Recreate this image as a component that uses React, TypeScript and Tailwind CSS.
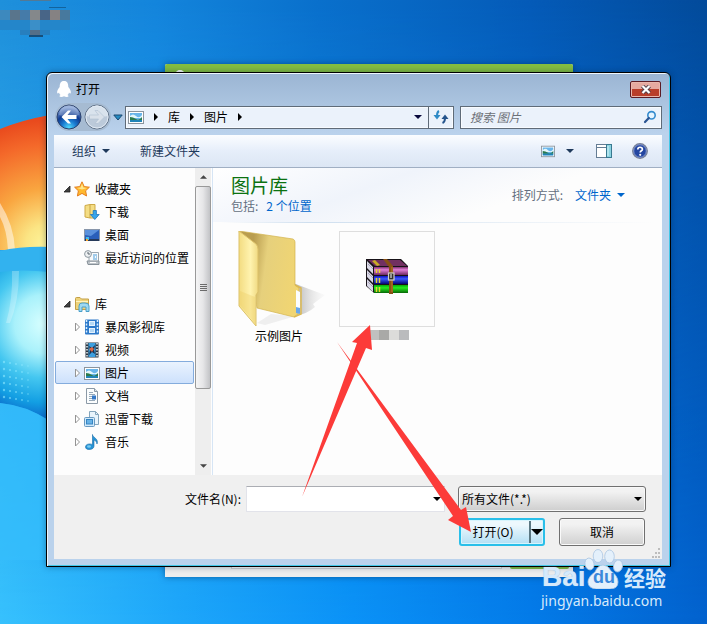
import type { ReactNode } from "react";

function Triangle({ className }: { className?: string }) {
  return (
    <svg viewBox="0 0 8 4" width="8" height="4" className={className} aria-hidden="true">
      <path d="M0 0H8L4 4Z" fill="currentColor" />
    </svg>
  );
}

function Wallpaper() {
  return (
    <svg className="absolute inset-0 h-full w-full" viewBox="0 0 707 624" preserveAspectRatio="none" aria-hidden="true">
      <defs>
        <linearGradient id="sky" x1="0" y1="0" x2="1" y2="0">
          <stop offset="0" stopColor="#1f90db" />
          <stop offset=".22" stopColor="#1485dc" />
          <stop offset=".45" stopColor="#0a70cc" />
          <stop offset=".75" stopColor="#055bb8" />
          <stop offset="1" stopColor="#034b9b" />
        </linearGradient>
        <linearGradient id="ground" x1="0" y1="0" x2="1" y2="0">
          <stop offset="0" stopColor="#37c1fd" />
          <stop offset=".25" stopColor="#1ea7fa" />
          <stop offset=".5" stopColor="#0a92f7" />
          <stop offset=".75" stopColor="#037be9" />
          <stop offset="1" stopColor="#0262ce" />
        </linearGradient>
        <linearGradient id="fade" x1="0" y1="0" x2="0" y2="1">
          <stop offset="0" stopColor="#000" />
          <stop offset=".3" stopColor="#555" />
          <stop offset="1" stopColor="#fff" />
        </linearGradient>
        <mask id="down">
          <rect width="707" height="624" fill="url(#fade)" />
        </mask>
        <radialGradient id="flame" gradientUnits="userSpaceOnUse" cx="46" cy="245" r="125">
          <stop offset="0" stopColor="#fdf59b" />
          <stop offset=".16" stopColor="#fbe584" />
          <stop offset=".45" stopColor="#f9a640" />
          <stop offset=".8" stopColor="#f4692a" />
          <stop offset="1" stopColor="#e94a1d" />
        </radialGradient>
        <radialGradient id="pane" gradientUnits="userSpaceOnUse" cx="44" cy="324" r="98">
          <stop offset="0" stopColor="#d8ffff" />
          <stop offset=".3" stopColor="#a9f1fb" />
          <stop offset=".55" stopColor="#45c7f0" />
          <stop offset=".8" stopColor="#139fe3" />
          <stop offset="1" stopColor="#0a63c8" />
        </radialGradient>
      </defs>
      <rect width="707" height="624" fill="url(#sky)" />
      <rect width="707" height="624" fill="url(#ground)" mask="url(#down)" />
      <path d="M0 129Q22 120 50 115V250H0Z" fill="url(#flame)" />
      <path d="M0 203Q14 225 15 250H8Q7 230 0 217Z" fill="#fff" opacity=".5" />
      <path d="M0 251Q22 246 50 247V274H0Z" fill="#32b2ef" />
      <path d="M0 272Q20 269 50 272V421Q25 405 0 403Z" fill="url(#pane)" />
      <path d="M12 271h7q0 30-9 52H6q7-24 6-52Z" fill="#fff" opacity=".25" />
      <g fill="#8ee9ff" opacity=".6">
        {[0, 1, 2, 3, 4, 5].map((r) =>
          [0, 1, 2, 3, 4].map((c) => (
            <circle key={`${r}-${c}`} cx={4 + c * 6} cy={362 + r * 7 + c} r={1.2 - c * 0.1} />
          )),
        )}
      </g>
      <path d="M0 403Q25 405 50 421V560H0Z" fill="#34bdfc" opacity=".7" />
      <g>
        <rect x="20" y="0" width="31" height="1" fill="#527995" />
        <rect x="0" y="10" width="10" height="10" fill="#3d89be" />
        <rect x="10" y="10" width="10" height="10" fill="#59758c" />
        <rect x="20" y="10" width="10" height="10" fill="#457ba9" />
        <rect x="30" y="10" width="10" height="10" fill="#84888b" />
        <rect x="40" y="10" width="10" height="10" fill="#486587" />
        <rect x="50" y="10" width="10" height="10" fill="#858283" />
        <rect x="60" y="10" width="10" height="10" fill="#47799e" />
        <rect x="0" y="20" width="70" height="10" fill="#2486ca" />
        <rect x="30" y="20" width="10" height="10" fill="#3b8fc8" />
        <rect x="20" y="30" width="30" height="5" fill="#277fbe" />
        <rect x="30" y="30" width="10" height="5" fill="#546f88" />
        <rect x="29" y="35" width="14" height="2" fill="#174e79" />
        <rect x="49" y="7" width="17" height="1" fill="#12639d" />
      </g>
    </svg>
  );
}

function PictureIcon({ size }: { size: number }) {
  return (
    <svg width={size} height={size} viewBox="0 0 16 16" aria-hidden="true">
      <rect x=".5" y="2.5" width="15" height="12" fill="#fff" stroke="#8b949c" />
      <rect x="2" y="4" width="12" height="9" fill="#69b5ea" />
      <path d="M2 7q3-3 6 0t6-1v3H2Z" fill="#e2f6fb" />
      <path d="M2 8q3 0 6 2t6-2v3H2Z" fill="#2b7a4c" />
      <path d="M2 11h12v2H2Z" fill="#2184b7" />
    </svg>
  );
}

const icons: Record<string, ReactNode> = {
  star: (
    <>
      <path d="M8 .8 10.2 5.6 15.4 6.2 11.6 9.8 12.6 15 8 12.4 3.4 15 4.4 9.8.6 6.2 5.8 5.6Z" fill="#ffb92e" stroke="#e57f20" strokeLinejoin="round" />
      <path d="M8 2.5 9.3 6.4 13 7 8 8.5 3 7 6.6 6.4Z" fill="#ffe68c" />
    </>
  ),
  download: (
    <>
      <path d="M1 1.5 6 .5h5V14H6l-5-1Z" fill="#f4dd84" stroke="#cda947" />
      <path d="M6 1V14" stroke="#c9a444" />
      <path d="M9.2 6.5h3.2v4h2.8l-4.4 5-4.4-5h2.8Z" fill="#36a5ec" stroke="#1a73bb" strokeWidth=".8" />
    </>
  ),
  desktop: (
    <>
      <rect x=".5" y="2.5" width="15" height="11" fill="#2a5fba" stroke="#8896aa" />
      <path d="M1 3h14L7 9 1 8Z" fill="#5b91dc" />
      <rect x="1" y="12" width="14" height="2" fill="#263959" />
      <path d="M2 10h3v3H2Z" fill="#45bce8" />
      <path d="M2 12h2v2H2Z" fill="#f7a32c" />
    </>
  ),
  recent: (
    <>
      <path d="M5 2.500h9.500v9H5Z" fill="#f8fafb" stroke="#9aa5ae" />
      <path d="M9 5h4M9 7h2M12 7h1M9 9h4" stroke="#4d9dd9" />
      <path d="M3 11h12v3.500H4Z" fill="#bfc5ca" stroke="#879199" />
      <path d="M6 12.500h6" stroke="#fff" />
      <circle cx="4" cy="4" r="3.400" fill="#eef1f3" stroke="#8d989f" />
      <path d="M4 2v2h2" fill="none" stroke="#59656d" />
    </>
  ),
  library: (
    <>
      <path d="M1.500 13.500V2.500Q1.500 1.500 2.500 1.500H6l1.500 1.500H14.500V13.500Z" fill="#eed37b" stroke="#c4a047" />
      <path d="M2 5.500H14" stroke="#fff4bd" />
      <path d="M5 15.500V10Q5 7 8 7h3q4 0 4 3v5.500h-3V11H8v4.500Z" fill="#9ed9f2" stroke="#4b9fc9" />
    </>
  ),
  storm: (
    <>
      <rect x="1" y=".5" width="14" height="15" rx="1" fill="#2c79ca" />
      <path d="M2.500 1V15M13.500 1V15" stroke="#d7edff" strokeWidth="1.500" strokeDasharray="2 1.500" />
      <path d="M5 2h6v5H5ZM5 9h6v5H5Z" fill="#e3f1fd" />
      <path d="M6 3h4v3H6ZM6 10h4v3H6Z" fill="#b4d8f5" />
    </>
  ),
  video: (
    <>
      <rect x="1.500" y=".5" width="13" height="15" fill="#2b3540" />
      <path d="M3 1V15M13 1V15" stroke="#e9eff2" strokeWidth="1.500" strokeDasharray="1.500 1.500" />
      <rect x="4.500" y="1" width="7" height="14" fill="#3c9fdf" />
      <path d="m5 4 3 2 3-3-1 5 1 4-3-2-3 3 1-5Z" fill="#1a304e" />
      <path d="m5 7 3-2 2 2-2 3Z" fill="#de6845" />
    </>
  ),
  document: (
    <>
      <path d="M2.500.5h8l3 3v12h-11Z" fill="#fbfdfe" stroke="#8b99a6" />
      <path d="M10.500.5v3h3" fill="#dbe4ea" stroke="#8b99a6" />
      <path d="M5 4.500h4M5 6.500h6M5 8.500h3M5 10.500h3M5 12.500h6" stroke="#97a9b9" />
      <rect x="8" y="7.500" width="4" height="4" fill="#3479c8" />
    </>
  ),
  thunder: (
    <>
      <path d="M5.500.5h6l3 3v10h-9Z" fill="#e8f4fc" stroke="#84a6bd" />
      <path d="M11.500.5v3h3" fill="none" stroke="#84a6bd" />
      <rect x=".5" y="6.500" width="10" height="9" rx="1" fill="#d0e9fa" stroke="#6899c0" />
      <rect x="2.500" y="8.500" width="6" height="4.500" fill="#68b2e5" stroke="#3685c3" />
    </>
  ),
  music: (
    <>
      <path d="M8.500.5c0 3 6.500 4 4.500 9.500-.3-2.500-1.500-3.500-3-4V12c0 4.500-8.500 4.700-8.500 1 0-3 4-3.700 7-2.500Z" fill="#2693d5" stroke="#176ca8" strokeWidth=".6" />
      <ellipse cx="5" cy="12.500" rx="2" ry="1.300" fill="#79ccf4" />
    </>
  ),
};

function TreeIcon({ name }: { name: string }) {
  if (name === "picture") return <PictureIcon size={16} />;
  return (
    <svg width="16" height="16" viewBox="0 0 16 16" aria-hidden="true">
      {icons[name]}
    </svg>
  );
}

function TreeGroup({ icon, label, children }: { icon: string; label: string; children: ReactNode }) {
  return (
    <li>
      <button className="flex h-[23px] w-full items-center pl-2">
        <svg width="8" height="8" viewBox="0 0 8 8" className="mr-[3px]" aria-hidden="true">
          <path d="M7 1V7H1Z" fill="#404040" stroke="#222" strokeWidth=".8" />
        </svg>
        <TreeIcon name={icon} />
        <span className="ml-[5px]">{label}</span>
      </button>
      <ul>{children}</ul>
    </li>
  );
}

function TreeItem({ icon, label, leaf, selected }: { icon: string; label: string; leaf?: boolean; selected?: boolean }) {
  return (
    <li>
      <button
        className={
          selected
            ? "flex h-[23px] w-full items-center rounded-xs border border-[#84acdd] bg-linear-to-b from-[#eaf3fe] to-[#cde1fc] pl-[18px]"
            : "flex h-[23px] w-full items-center border border-transparent pl-[18px]"
        }
      >
        <svg width="7" height="10" viewBox="0 0 7 10" className={leaf ? "invisible mr-[3px]" : "mr-[3px]"} aria-hidden="true">
          <path d="M1.500 1 5.500 5 1.500 9Z" fill="#fff" stroke="#949494" />
        </svg>
        <TreeIcon name={icon} />
        <span className="ml-[5px] whitespace-nowrap">{label}</span>
      </button>
    </li>
  );
}

function TitleBar() {
  return (
    <header className="flex h-[30px] items-center pl-[2px] pt-[2px]">
      <svg width="16" height="18" viewBox="0 0 16 18" aria-hidden="true">
        <path d="M8 1C4.500 1 3.700 3.700 3.700 7 2 9 .8 11 1.200 13c.3 1 1.200.3 1.800-.6.2 1.200.7 2 1.500 2.700-1.800.8-1.300 2 .8 2 1 0 2-.3 2.700-.8.700.5 1.700.8 2.700.8 2.100 0 2.600-1.200.8-2 .8-.7 1.300-1.500 1.500-2.700.6.9 1.500 1.600 1.800.6.4-2-.8-4-2.500-6C12.300 3.700 11.500 1 8 1Z" fill="#fff" />
      </svg>
      <h1 className="ml-1 text-xs">打开</h1>
      <button
        aria-label="关闭"
        className="ml-auto mr-px flex h-[17px] w-[31px] items-center justify-center rounded-xs border border-[#5c1b24] bg-linear-to-b from-[#e6aaa0] from-45% to-[#b93e2a] to-50% shadow-[inset_0_0_0_1px_#e9b7ac]"
      >
        <svg width="12" height="9" viewBox="0 0 12 9" aria-hidden="true">
          <path d="m2.500 1 7 7m0-7-7 7" stroke="#53414a" strokeWidth="4" />
          <path d="m2.500 1 7 7m0-7-7 7" stroke="#fff" strokeWidth="2.200" />
        </svg>
      </button>
    </header>
  );
}

function NavButtons() {
  return (
    <div className="flex items-center">
      <div className="flex gap-[2px] rounded-full bg-[#a6bbd2] p-px">
        <button aria-label="后退">
          <svg width="26" height="26" viewBox="0 0 26 26" aria-hidden="true">
            <defs>
              <radialGradient id="orb" cx=".5" cy=".95" r=".85">
                <stop offset="0" stopColor="#52dcff" />
                <stop offset=".35" stopColor="#1a7bd0" />
                <stop offset=".65" stopColor="#113c92" />
                <stop offset="1" stopColor="#7c9bd2" />
              </radialGradient>
            </defs>
            <circle cx="13" cy="13" r="12" fill="url(#orb)" stroke="#2b416c" />
            <path d="M3 11A10 10 0 0 1 23 11Q13 14 3 11Z" fill="#fff" opacity=".25" />
            <path d="M5.500 13 12 6.500h3L11.500 11H20.500v4H11.500L15 19.500H12Z" fill="#fff" />
          </svg>
        </button>
        <button aria-label="前进">
          <svg width="26" height="26" viewBox="0 0 26 26" aria-hidden="true">
            <circle cx="13" cy="13" r="12" fill="#bccada" stroke="#64758a" />
            <path d="M2.500 12A10.500 10.500 0 0 1 23.500 12Q13 15 2.500 12Z" fill="#e0e8f1" opacity=".8" />
            <circle cx="13" cy="13" r="11" fill="none" stroke="#e1eaf4" />
            <path d="M20.500 13 14 6.500h-3L14.500 11H5.500v4h9L11 19.500h3Z" fill="#d9e1ea" stroke="#afbfd1" strokeWidth=".6" />
          </svg>
        </button>
      </div>
      <button aria-label="最近的位置" className="mx-[2px]">
        <svg width="10" height="7" viewBox="0 0 10 7" aria-hidden="true">
          <path d="M.8 1h8.400L5 6Z" fill="#258bc2" stroke="#1b4870" />
        </svg>
      </button>
    </div>
  );
}

function Crumb({ children }: { children: string }) {
  return (
    <>
      <button className="text-xs">{children}</button>
      <svg width="4" height="8" viewBox="0 0 4 8" className="mx-[10px]" aria-hidden="true">
        <path d="M0 0 4 4 0 8Z" />
      </svg>
    </>
  );
}

function AddressRow() {
  return (
    <div className="flex items-center pl-px">
      <NavButtons />
      <div className="flex h-[23px] min-w-0 flex-1 border border-[#5f6b78] bg-[#ebf2fb] shadow-[inset_0_0_0_1px_#f8fbff]">
        <nav aria-label="地址" className="flex flex-1 items-center pl-[2px]">
          <PictureIcon size={16} />
          <svg width="4" height="8" viewBox="0 0 4 8" className="mx-[10px]" aria-hidden="true">
            <path d="M0 0 4 4 0 8Z" />
          </svg>
          <Crumb>库</Crumb>
          <Crumb>图片</Crumb>
        </nav>
        <button aria-label="以前的位置" className="px-[6px] text-[#08093c]">
          <Triangle />
        </button>
        <button aria-label="刷新" className="flex w-[25px] items-center justify-center border-l border-[#5f6b78]">
          <svg width="16" height="14" viewBox="0 0 16 14" aria-hidden="true">
            <path d="M6 1Q4 2 4 6" fill="none" stroke="#2e8ac6" strokeWidth="2" />
            <path d="M.5 5h7L4 9.500Z" fill="#2e8ac6" />
            <path d="M9.500 13q2.500-1 2.500-5" fill="none" stroke="#24548c" strokeWidth="2" />
            <path d="M8.500 9h7L12 4.500Z" fill="#24548c" />
          </svg>
        </button>
      </div>
      <label className="ml-[6px] flex h-[23px] w-[202px] items-center border border-[#5f6b78] bg-[#ebf2fb] pl-[9px] pr-1 shadow-[inset_0_0_0_1px_#f8fbff]">
        <input
          aria-label="搜索图片"
          placeholder="搜索 图片"
          className="min-w-0 flex-1 text-xs italic outline-none placeholder:text-[#6b7077]"
        />
        <svg width="14" height="14" viewBox="0 0 14 14" aria-hidden="true">
          <circle cx="8.500" cy="5.300" r="3.700" fill="#e5f4ff" stroke="#348bce" strokeWidth="1.600" />
          <path d="M5.800 8 2 12" stroke="#2a5492" strokeWidth="2.200" strokeLinecap="round" />
        </svg>
      </label>
    </div>
  );
}

function Toolbar() {
  return (
    <div className="flex h-[33px] items-center border-b border-[#a0afc3] bg-linear-to-b from-[#fbfdff] via-[#e6eefa] via-50% to-[#dce6f4] pl-[18px] pr-[14px] text-[#1e395b]">
      <button className="flex items-center gap-[6px]">
        组织
        <Triangle />
      </button>
      <button className="ml-[30px]">新建文件夹</button>
      <button aria-label="更改视图" className="ml-auto flex items-center gap-[11px]">
        <PictureIcon size={14} />
        <Triangle />
      </button>
      <button aria-label="预览窗格" className="ml-[22px]">
        <svg width="16" height="16" viewBox="0 0 16 16" aria-hidden="true">
          <rect x=".5" y="1.500" width="15" height="13" fill="#fff" stroke="#657d94" />
          <path d="M1 4.500h9" stroke="#657d94" />
          <rect x="10.500" y="1.500" width="5" height="13" fill="#8bd3e1" stroke="#397990" />
          <path d="M12 3v10" stroke="#d7f5fa" />
        </svg>
      </button>
      <button aria-label="帮助" className="ml-5">
        <svg width="16" height="16" viewBox="0 0 16 16" aria-hidden="true">
          <circle cx="8" cy="8" r="7.300" fill="#2446a1" stroke="#7a8296" strokeWidth="1.300" />
          <circle cx="8" cy="8" r="6.300" fill="none" stroke="#a8b8df" strokeWidth=".7" />
          <path d="M5.800 6.500C5.800 3.500 10.400 3.600 10.400 6.200 10.400 7.800 8.200 7.800 8.200 9.600" fill="none" stroke="#fff" strokeWidth="1.700" />
          <circle cx="8.200" cy="11.800" r="1.100" fill="#fff" />
        </svg>
      </button>
    </div>
  );
}

function Sidebar() {
  return (
    <aside className="flex w-[157px] shrink-0">
      <ul className="flex-1 px-px pb-[22px] pt-[9px]">
        <TreeGroup icon="star" label="收藏夹">
          <TreeItem icon="download" label="下载" leaf />
          <TreeItem icon="desktop" label="桌面" leaf />
          <TreeItem icon="recent" label="最近访问的位置" leaf />
        </TreeGroup>
        <li className="h-[23px]" aria-hidden="true" />
        <TreeGroup icon="library" label="库">
          <TreeItem icon="storm" label="暴风影视库" />
          <TreeItem icon="video" label="视频" />
          <TreeItem icon="picture" label="图片" selected />
          <TreeItem icon="document" label="文档" />
          <TreeItem icon="thunder" label="迅雷下载" />
          <TreeItem icon="music" label="音乐" />
        </TreeGroup>
      </ul>
      <div className="flex w-4 flex-col bg-[#eeeeee] text-[#444]">
        <button aria-label="向上滚动" className="flex h-[18px] items-center justify-center">
          <Triangle className="w-[7px] rotate-180" />
        </button>
        <div className="flex h-[203px] flex-col items-center justify-center gap-px rounded-xs border border-[#999] bg-linear-to-r from-[#f5f5f5] via-[#e6e6e8] to-[#c2c3c6]">
          <i className="h-px w-[7px] bg-[#6b6b6b]" />
          <i className="h-px w-[7px] bg-[#6b6b6b]" />
          <i className="h-px w-[7px] bg-[#6b6b6b]" />
          <i className="h-px w-[7px] bg-[#6b6b6b]" />
        </div>
        <button aria-label="向下滚动" className="mt-auto flex h-[18px] items-center justify-center">
          <Triangle className="w-[7px]" />
        </button>
      </div>
    </aside>
  );
}

function FolderPicture() {
  return (
    <svg width="96" height="96" viewBox="0 0 96 96" aria-hidden="true">
      <defs>
        <linearGradient id="front" x1="0" y1="0" x2="1" y2="0">
          <stop offset="0" stopColor="#f3dc81" />
          <stop offset=".6" stopColor="#fff3af" />
          <stop offset="1" stopColor="#f0da83" />
        </linearGradient>
        <linearGradient id="back" x1="0" y1="0" x2="1" y2=".2">
          <stop offset=".25" stopColor="#b99d4f" />
          <stop offset=".5" stopColor="#e6d07c" />
          <stop offset="1" stopColor="#f0d573" />
        </linearGradient>
        <linearGradient id="shade" x1="0" y1="0" x2="1" y2="0">
          <stop offset="0" stopColor="#777" stopOpacity=".6" />
          <stop offset="1" stopColor="#ddd" stopOpacity=".1" />
        </linearGradient>
      </defs>
      <path d="M62 52 94 64 82 73 84 76Q76 83 66 84Z" fill="url(#shade)" />
      <path d="m26 92 14-9 25 2-31 9Z" fill="#777" opacity=".1" />
      <path d="M8 0 62 8Q64 9 64 11V54L68 57V82L63 86 26 77Z" fill="url(#back)" stroke="#d3b34e" strokeWidth=".7" />
      <path d="M65 59l4 2v22l-4-2Z" fill="#fbfdff" />
      <path d="M65 76l4 1v6l-4-1Z" fill="#69a7ea" />
      <path d="M64 54 70 57V83L63 86" fill="none" stroke="#dcb951" strokeWidth="1.500" />
      <path d="M8 0 25 13Q27 15 27 18V61L25 64V95L8 75Z" fill="url(#front)" stroke="#dcc169" />
      <path d="M9 60 24 66V93L9 74Z" fill="#eccb61" opacity=".35" />
    </svg>
  );
}

function ArchivePicture() {
  return (
    <svg width="42" height="35" viewBox="0 0 42 35" aria-hidden="true">
      <defs>
        <linearGradient id="purple" x1="0" y1="0" x2="0" y2="1">
          <stop offset="0" stopColor="#7e316f" />
          <stop offset=".35" stopColor="#e27fd6" />
          <stop offset="1" stopColor="#6f2963" />
        </linearGradient>
        <linearGradient id="blue" x1="0" y1="0" x2="0" y2="1">
          <stop offset="0" stopColor="#1112c0" />
          <stop offset=".35" stopColor="#3b59ff" />
          <stop offset="1" stopColor="#050575" />
        </linearGradient>
        <linearGradient id="green" x1="0" y1="0" x2="0" y2="1">
          <stop offset="0" stopColor="#09a609" />
          <stop offset=".35" stopColor="#26ed20" />
          <stop offset="1" stopColor="#076607" />
        </linearGradient>
      </defs>
      <path d="M0 0H35L42 7v27H8L0 27Z" fill="#171218" />
      <path d="M2 1H34L41 7H9Z" fill="#713061" />
      <path d="m1 2 6 6v7L1 9ZM1 11l6 6v7l-6-6ZM1 20l6 6v7l-6-6Z" fill="#d9d8e6" />
      <path d="m2 5 5 5M2 14l5 5M2 23l5 5" stroke="#8f8aa4" strokeWidth=".7" />
      <rect x="8" y="8" width="34" height="8" fill="url(#purple)" />
      <rect x="8" y="17" width="34" height="8" fill="url(#blue)" />
      <rect x="8" y="26" width="34" height="8" fill="url(#green)" />
      <path d="M10.500 10v4M13.500 10v4M10.500 19v5M13.500 19v5M10.500 28v5M13.500 28v5" stroke="#e8d42f" strokeWidth="1.500" />
      <path d="m6 2 3-1 5 5-3 1Z" fill="#c9ac25" />
      <path d="M17 0h4l6 7v28h-4V8Z" fill="#885014" />
      <path d="M26 8v25" stroke="#bc7a2c" />
      <rect x="22.500" y="14" width="5.500" height="7" fill="#33302b" stroke="#d2d0cb" strokeWidth="1.200" />
      <path d="M25 15v4" stroke="#fff" />
    </svg>
  );
}

function Library() {
  return (
    <main className="ml-px flex-1 border-l border-[#d6e5f5]">
      <div className="flex h-[54px] items-start justify-between bg-linear-[160deg] from-white via-[#f0f4fb] via-35% to-[#fdfdfd] to-65% pl-[18px] pr-[37px]">
        <div>
          <h2 className="pt-[5px] text-[19px] leading-6 text-[#0c7211]">图片库</h2>
          <p className="leading-[18px] text-[#646f80]">
            包括:
            <a href="#locations" className="ml-2 text-[#0066cc]">2 个位置</a>
          </p>
        </div>
        <div className="flex items-center pt-[18px] leading-[18px] text-[#646f80]">
          排列方式:
          <button className="ml-3 flex items-center gap-[6px] text-[#0066cc]">
            文件夹
            <Triangle />
          </button>
        </div>
      </div>
      <div className="mx-2 h-px bg-linear-to-r from-transparent via-[#cfdfef] via-20% to-transparent" />
      <ul className="flex gap-3 pl-[18px] pt-2">
        <li className="flex w-24 flex-col items-center">
          <FolderPicture />
          <span className="leading-[18px]">示例图片</span>
        </li>
        <li className="flex w-24 flex-col items-center">
          <div className="flex h-24 w-24 items-center justify-center border border-[#dedede] bg-[#fdfdfd] pb-[6px]">
            <ArchivePicture />
          </div>
          <svg width="40" height="10" viewBox="0 0 40 10" className="ml-1 mt-[3px]" aria-hidden="true">
            <rect width="10" height="10" fill="#c0c0c0" />
            <rect x="10" width="10" height="10" fill="#a9a9a7" />
            <rect x="20" width="10" height="10" fill="#dcdcda" />
            <rect x="30" width="10" height="10" fill="#babbbd" />
          </svg>
        </li>
      </ul>
    </main>
  );
}

function Footer() {
  return (
    <footer className="relative bg-[#f0f0f0] px-4 pb-[13px] pt-[11px]">
      <div className="flex items-center">
        <label htmlFor="filename" className="w-[171px] text-right">文件名(N):</label>
        <div className="ml-[5px] flex h-[26px] flex-1 items-center border border-[#e2e3ea] border-t-[#abadb3] bg-white">
          <input id="filename" className="min-w-0 flex-1 px-1 outline-none" />
          <button aria-label="文件名列表" className="px-[3px]">
            <Triangle />
          </button>
        </div>
        <div className="relative ml-[13px] w-[188px]">
          <select
            aria-label="文件类型"
            className="h-[26px] w-full appearance-none rounded-[3px] border border-[#707070] bg-linear-to-b from-[#f2f2f2] from-20% to-[#cecece] pl-[3px] shadow-[inset_0_0_0_1px_#f8f8f8] outline-none"
          >
            <option>所有文件(*.*)</option>
          </select>
          <Triangle className="pointer-events-none absolute right-1 top-[11px]" />
        </div>
      </div>
      <div className="mt-[6px] flex justify-end gap-[14px]">
        <div className="flex h-7 w-[86px] rounded-[3px] border-2 border-[#2abfe9] bg-linear-to-b from-[#edf8fd] from-20% to-[#b4dff4] shadow-[inset_0_0_0_1px_#d6f4fd]">
          <button className="flex-1 pr-1">打开(O)</button>
          <button aria-label="打开选项" className="my-px flex w-[14px] items-center justify-center border-l-2 border-[#5b7782]">
            <svg width="12" height="6" viewBox="0 0 12 6" aria-hidden="true">
              <path d="M0 0h12L6 6Z" />
            </svg>
          </button>
        </div>
        <button className="mr-px h-7 w-[86px] rounded-[3px] border border-[#707070] bg-linear-to-b from-[#f2f2f2] from-20% to-[#d0d0d0] shadow-[inset_0_0_0_1px_#fafafa]">
          取消
        </button>
      </div>
      <svg width="10" height="10" viewBox="0 0 10 10" className="absolute bottom-px right-px" aria-hidden="true">
        <path d="M7 0h2v2H7ZM4 4h2v2H4ZM7 4h2v2H7ZM1 8h2v2H1ZM4 8h2v2H4ZM7 8h2v2H7Z" fill="#bdbdbd" />
      </svg>
    </footer>
  );
}

function Watermark() {
  return (
    <div className="pointer-events-none absolute right-[39px] top-[549px] flex w-[127px] flex-col text-[#d5e9fb]">
      <div className="flex items-end">
        <span className="w-[43px] pl-px font-['Liberation_Sans',sans-serif] text-[28px] font-bold leading-6 [text-shadow:0_0_1px_#7fb0e0]">Bai</span>
        <div className="relative h-10 w-10">
          <svg width="40" height="40" viewBox="0 0 40 40" aria-hidden="true">
            <g fill="#e4f0fb" stroke="#a9c5e2" strokeWidth=".8">
              <ellipse cx="5.500" cy="15" rx="4.500" ry="6" transform="rotate(-12 5.500 15)" />
              <ellipse cx="14" cy="7" rx="4.800" ry="6.500" />
              <ellipse cx="25.500" cy="7.500" rx="4.800" ry="6.500" />
              <ellipse cx="34" cy="17" rx="4.500" ry="6" transform="rotate(12 34 17)" />
              <path d="M19 16Q24 16 27 22q7 5 7 11 0 7-8 7H12q-8-1-8-7 0-5 7-10 3-7 8-7Z" />
            </g>
          </svg>
          <span className="absolute inset-x-0 bottom-[2px] text-center font-['Liberation_Sans',sans-serif] text-[18px] font-bold leading-5 text-[#3b88da]">du</span>
        </div>
        <span className="text-[21px] font-bold leading-6">经验</span>
      </div>
      <span className="font-['Noto_Sans',sans-serif] text-[14px] leading-6">jingyan.baidu.com</span>
    </div>
  );
}

export default function App() {
  return (
    <div className="relative h-screen overflow-hidden font-['Noto_Sans_CJK_SC',sans-serif] text-xs text-black">
      <Wallpaper />
      <div className="absolute left-[165px] right-[134px] top-[64px] flex h-[513px] flex-col justify-between rounded-t-xs bg-[#ededed] shadow-[0_0_6px_#00336699]">
        <div className="h-3 rounded-t-xs bg-[#84bd40]">
          <svg width="30" height="9" viewBox="0 0 30 9" aria-hidden="true">
            <circle cx="15" cy="11" r="5" fill="#fff" />
          </svg>
        </div>
        <div className="flex items-end justify-between pb-2 pl-[66px] pr-1">
          <div className="h-4 w-[271px] border border-[#cfcfcf] bg-white" />
          <div className="h-4 w-[59px] rounded-xs bg-[#84bd40]" />
        </div>
      </div>
      <section
        aria-label="打开"
        className="absolute left-[46px] right-[36px] top-[72px] rounded-t-[6px] border border-black bg-linear-to-b from-[#9bb5d3] to-[#bad2ec] to-[60px] pb-[7px] pl-[7px] pr-2 shadow-[inset_1px_1px_0_#eef6fd,inset_-1px_-1px_0_#43c8e8,0_0_6px_#00224466]"
      >
        <TitleBar />
        <AddressRow />
        <div className="mt-1 bg-[#fdfdfd]">
          <Toolbar />
          <div className="flex">
            <Sidebar />
            <Library />
          </div>
          <Footer />
        </div>
      </section>
      <Watermark />
      <svg className="pointer-events-none absolute left-0 top-0" width="707" height="624" viewBox="0 0 707 624" aria-hidden="true">
        <path d="M302 497 357 343 352 342 370 325 372 350 366 348Z" fill="#fc3b39" />
        <path d="M337 342 461 510 466 507 471 532 448 520 453 516Z" fill="#fc3b39" />
      </svg>
    </div>
  );
}
